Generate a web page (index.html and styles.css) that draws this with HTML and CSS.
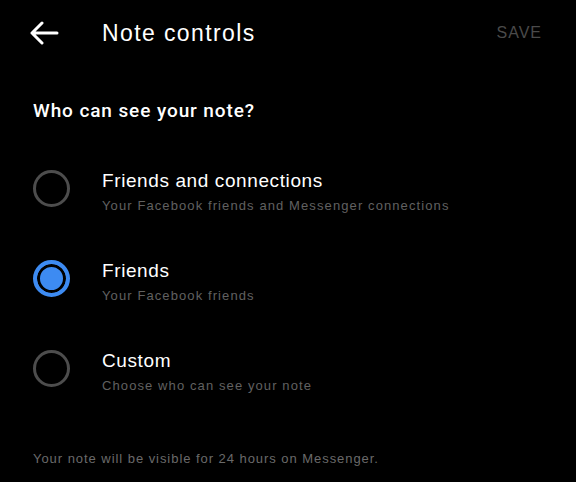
FILE: index.html
```html
<!DOCTYPE html>
<html lang="en">
<head>
    <meta charset="UTF-8">
    <meta name="viewport" content="width=device-width, initial-scale=1.0">
    <title>Note controls</title>
    <link rel="stylesheet" href="styles.css">
</head>
<body>
    <header class="topbar">
        <button class="back" aria-label="Back">
            <svg width="30" height="24" viewBox="0 0 30 24">
                <path d="M28 12H3M13 2L3 12l10 10" fill="none" stroke="#fff" stroke-width="3" stroke-linecap="round" stroke-linejoin="round"/>
            </svg>
        </button>
        <h1 class="title">Note controls</h1>
        <span class="save">SAVE</span>
    </header>

    <div class="content">
        <h2 class="question">Who can see your note?</h2>

        <div class="options">
            <div class="option">
                <span class="radio"></span>
                <div class="option-text">
                    <div class="option-title">Friends and connections</div>
                    <div class="option-sub">Your Facebook friends and Messenger connections</div>
                </div>
            </div>
            <div class="option">
                <span class="radio checked"></span>
                <div class="option-text">
                    <div class="option-title">Friends</div>
                    <div class="option-sub">Your Facebook friends</div>
                </div>
            </div>
            <div class="option">
                <span class="radio"></span>
                <div class="option-text">
                    <div class="option-title">Custom</div>
                    <div class="option-sub">Choose who can see your note</div>
                </div>
            </div>
        </div>

        <p class="note">Your note will be visible for 24 hours on Messenger.</p>
    </div>
</body>
</html>
```

FILE: styles.css
```css
body {
    margin: 0;
    background: #000;
    color: #fff;
    font-family: 'Liberation Sans', Arial, sans-serif;
    height: 482px;
    overflow: hidden;
}

.topbar {
    display: flex;
    align-items: center;
    height: 66px;
    padding: 0 34px 0 29px;
}

.back {
    background: none;
    border: none;
    padding: 0;
    width: 30px;
    height: 24px;
    display: flex;
}

.title {
    margin: 0 0 0 43px;
    font-size: 23px;
    font-weight: normal;
    letter-spacing: 1.4px;
    flex: 1;
}

.save {
    color: #4a4a4a;
    font-size: 16px;
    letter-spacing: 1px;
}

.content {
    padding: 0 33px;
}

.question {
    margin: 33px 0 0;
    font-family: Roboto, 'Liberation Sans', sans-serif;
    font-size: 19px;
    font-weight: 500;
    letter-spacing: 0.9px;
    line-height: 24px;
}

.options {
    display: flex;
    flex-direction: column;
    gap: 45px;
    margin-top: 47px;
}

.option {
    display: flex;
    align-items: flex-start;
}

.radio {
    width: 37px;
    height: 37px;
    border: 3px solid #4d4d4d;
    border-radius: 50%;
    box-sizing: border-box;
    flex-shrink: 0;
}

.radio.checked {
    border: 4px solid #3d8bf2;
    background: #3d8bf2;
    box-shadow: inset 0 0 0 3px #000;
}

.option-text {
    margin-left: 32px;
}

.option-title {
    font-size: 19px;
    letter-spacing: 0.6px;
    line-height: 22px;
}

.option-sub {
    margin-top: 5px;
    font-size: 13px;
    color: #616161;
    letter-spacing: 1.1px;
    line-height: 18px;
}

.note {
    margin: 56px 0 0;
    font-size: 13px;
    color: #6a6a6a;
    letter-spacing: 0.95px;
}
```
